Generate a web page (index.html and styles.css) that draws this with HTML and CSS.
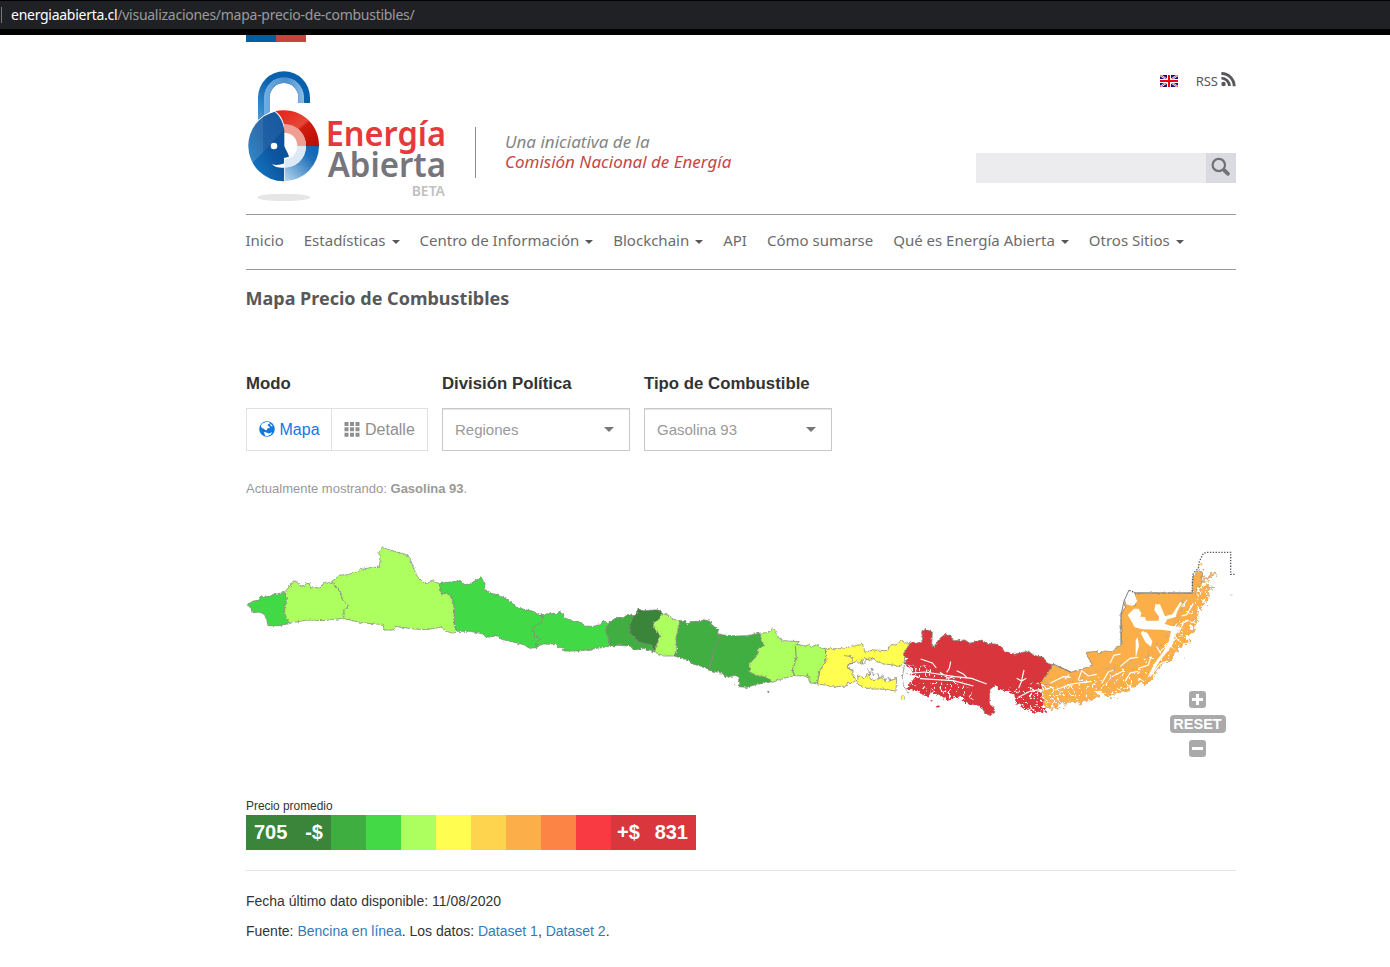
FILE: index.html
```html
<!DOCTYPE html>
<html lang="es">
<head>
<meta charset="utf-8">
<title>Mapa Precio de Combustibles</title>
<link rel="stylesheet" href="styles.css">
</head>
<body>
<div class="urlbar"><div class="url"><span class="host">energiaabierta.cl</span>/visualizaciones/mapa-precio-de-combustibles/</div></div>
<div class="page">
<div class="gob"><i></i><i></i></div>
<header class="header">
  <svg class="logo" viewBox="0 0 660 450" width="220" height="150" role="img" aria-label="Energía Abierta">
    <defs>
      <linearGradient id="lock" x1="0" y1="1" x2="1" y2="0"><stop offset="0" stop-color="#4a98d4"/><stop offset=".5" stop-color="#0a62ae"/><stop offset="1" stop-color="#0860ac"/></linearGradient>
      <linearGradient id="lock2" x1="0" y1="0" x2="1" y2="0"><stop offset="0" stop-color="#73aee0"/><stop offset=".55" stop-color="#4a8fce"/><stop offset="1" stop-color="#8abce6"/></linearGradient>
      <linearGradient id="face" x1="0" y1="1" x2="1" y2="0"><stop offset="0" stop-color="#1583cd"/><stop offset=".5" stop-color="#0d559f"/><stop offset="1" stop-color="#074a95"/></linearGradient>
      <linearGradient id="red" x1="0" y1="0" x2="1" y2="1"><stop offset="0" stop-color="#e51f18"/><stop offset=".5" stop-color="#e54836"/><stop offset=".56" stop-color="#d21b10"/><stop offset="1" stop-color="#b50c00"/></linearGradient>
      <linearGradient id="blue" x1="0" y1="1" x2="1" y2="0"><stop offset="0" stop-color="#b9d9f0"/><stop offset=".7" stop-color="#1f70b9"/><stop offset="1" stop-color="#0864ae"/></linearGradient>
    </defs>
    <path d="M54 180V112a78 78 0 0 1 156 0v17h-35v-17a43 43 0 0 0-86 0v50z" fill="url(#lock)"/>
    <path d="M72 165V112a60 60 0 0 1 120 0v17h-17v-17a43 43 0 0 0-86 0v44z" fill="url(#lock2)"/>
    <circle cx="132" cy="258" r="110" fill="#fff"/>
    <path d="M106 154a105 105 0 0 1 131 104h-39c0-34-25-64-66-64-5-19-12-30-26-40z" fill="url(#red)"/>
    <path d="M132 192a65 65 0 0 1 66 66h-26c0-24-17-40-40-40z" fill="#ee9e92"/>
    <path d="M237 258a106 106 0 0 1-103 106v-42c34 1 64-26 64-64z" fill="url(#blue)"/>
    <path d="M198 258a66 66 0 0 1-64 65v-25c22-1 38-17 38-40z" fill="#dbeaf6"/>
    <path d="M104 155a105 105 0 0 0-79 103 106 106 0 0 0 107 106v-70l15-4c-2-10-11-23-14-32v-46c-3-24-13-45-29-57z" fill="url(#face)"/>
    <path d="M69 168v109l62-67c-5-27-12-43-27-55-13 3-25 7-35 13z" fill="#fff" opacity=".07"/>
    <path d="M25 258c0-40 18-72 44-90v109l-32 32c-7-14-12-32-12-51z" fill="#fff" opacity=".14"/>
    <circle cx="102" cy="258" r="10" fill="#fff"/>
    <path d="M96 313c12 4 25 2 37-3v13c-15 1-29-1-37-10z" fill="#fff"/>
    <ellipse cx="131" cy="412" rx="80" ry="11" fill="#e6e6e6"/>
    <g class="brand">
      <text x="257" y="258" font-size="105" fill="#e5393c" textLength="361" lengthAdjust="spacingAndGlyphs">Energía</text>
      <text x="263" y="352" font-size="103" fill="#75757b" textLength="355" lengthAdjust="spacingAndGlyphs">Abierta</text>
      <text x="515" y="408" font-size="45" fill="#bfbfc1" textLength="100" lengthAdjust="spacingAndGlyphs">BETA</text>
    </g>
  </svg>
  <div class="tagline">Una iniciativa de la<br><span>Comisión Nacional de Energía</span></div>
  <div class="tools">
    <div class="links">
      <svg width="18" height="12" viewBox="0 0 18 12"><path fill="#10107b" d="M0 0h18v12H0z"/><path d="M0 0l18 12M18 0L0 12" stroke="#fff" stroke-width="2.2"/><path d="M0 0l18 12M18 0L0 12" stroke="#d8203a" stroke-width=".8"/><path d="M9 0v12M0 6h18" stroke="#fff" stroke-width="4"/><path d="M9 0v12M0 6h18" stroke="#e8001c" stroke-width="2"/></svg>
      <span>RSS</span>
      <svg class="rss" width="15" height="15" viewBox="0 0 15 15" fill="none" stroke="#58585a"><circle cx="2.500" cy="12" r="2.200" fill="#58585a" stroke="none"/><path d="M.4 6.100a8 8 0 0 1 8 8M.4 1.500a12.700 12.700 0 0 1 12.800 12.700" stroke-width="2.900"/></svg>
    </div>
    <div class="search"><div class="field"></div><div class="go"><svg width="30" height="30" viewBox="0 0 30 30" fill="none" stroke="#707175"><circle cx="12.800" cy="12" r="6.200" stroke-width="2.200"/><path d="M17 16.300l1.500 1.300" stroke-width="2"/><path d="M18.500 17.500l3.500 3.300" stroke-width="3.800" stroke-linecap="round"/></svg></div></div>
  </div>
</header>
<nav class="nav">
  <a>Inicio</a><a class="dd">Estadísticas</a><a class="dd">Centro de Información</a><a class="dd">Blockchain</a><a>API</a><a>Cómo sumarse</a><a class="dd">Qué es Energía Abierta</a><a class="dd">Otros Sitios</a>
</nav>
<h1>Mapa Precio de Combustibles</h1>
<div class="controls">
  <div><label>Modo</label>
    <div class="modes">
      <span class="on"><svg width="16" height="16" viewBox="0 0 16 16"><circle cx="8" cy="8" r="7.800" fill="#1377e2"/><path d="M3 2.700L7 1l3 .1 1 1.500-1.800.5-.4 1.700 1.700.8.200 1.400-2 .2-1.200 2L6 8.900 4.700 7.500 3 7.200 1.800 5z" fill="#fff"/><path d="M11.500 2.400l2.200 2.600-.8.400-1.700-1.200zM4.800 11l2.700.5 2.300 1.100 3.500-1.300-1.500 2.200-3 1.500-2.600-.3z" fill="#fff"/></svg>Mapa</span>
      <span><svg width="16" height="16" viewBox="0 0 16 16" fill="#8f8f8f"><path d="M.5 1h4v4h-4zM6 1h4v4H6zM11.500 1h4v4h-4zM.5 6.300h4v4h-4zM6 6.300h4v4H6zM11.500 6.300h4v4h-4zM.5 11.700h4v4h-4zM6 11.700h4v4H6zM11.500 11.700h4v4h-4z"/></svg>Detalle</span>
    </div></div>
  <div><label>División Política</label><div class="select">Regiones</div></div>
  <div><label>Tipo de Combustible</label><div class="select">Gasolina 93</div></div>
</div>
<p class="status">Actualmente mostrando: <b>Gasolina 93</b>.</p>
<div class="map">
<svg width="990" height="230" viewBox="246 530 990 230">
  <defs>
    <filter id="rough" x="-5%" y="-5%" width="110%" height="110%"><feTurbulence type="fractalNoise" baseFrequency=".12" numOctaves="2" seed="4"/><feDisplacementMap in="SourceGraphic" scale="10" xChannelSelector="R" yChannelSelector="G"/></filter>
    <filter id="coast" x="-5%" y="-5%" width="110%" height="110%"><feTurbulence type="turbulence" baseFrequency=".045" numOctaves="3" seed="9" result="n"/><feColorMatrix in="n" type="matrix" values="0 0 0 0 0  0 0 0 0 0  0 0 0 0 0  0 0 0 14 -1.300" result="m"/><feTurbulence type="fractalNoise" baseFrequency=".07" numOctaves="3" seed="3" result="f"/><feDisplacementMap in="SourceGraphic" in2="f" scale="34" xChannelSelector="R" yChannelSelector="G" result="d"/><feComposite in="d" in2="m" operator="in"/></filter>
  </defs>
  <g class="regions">
    <g transform="translate(240 530) scale(.33333)" filter="url(#rough)">
      <path fill="#43d946" d="M22 224L40 213 57 211 64 197 70 202 90 196 133 187 141 210 135 225 134 248 140 266 149 280 120 287 84 287 80 270 74 254 60 246 36 248 34 236z"/>
      <path fill="#adff60" d="M133 187L164 152 187 170 197 160 208 161 212 175 219 170 235 174 243 172 253 155 260 160 276 156 300 185 308 210 326 229 312 241 311 264 285 268 250 272 200 270 149 280 140 266 134 248 135 225 141 210z"/>
      <path fill="#adff60" d="M276 154L300 135 325 134 340 127 352 128 362 119 395 112 416 112 421 95 416 66 428 53 506 77 532 140 555 161 567 158 580 149 586 157 598 160 604 190 620 190 634 198 643 228 641 265 643 285 652 303 638 310 620 304 603 291 560 299 520 297 466 289 462 300 432 300 430 288 420 283 370 279 311 266 312 241 326 229 308 210 300 185z"/>
    </g>
    <g transform="translate(430 560) scale(.33333)" filter="url(#rough)">
      <path fill="#43d946" d="M28 70L92 62 100 73 118 73 150 53 162 60 165 74 162 87 185 100 220 112 240 124 262 144 310 154 328 166 340 168 337 185 320 195 306 206 315 228 328 236 318 250 318 263 298 265 282 254 240 244 215 238 200 228 168 232 160 222 120 214 81 214 73 196 74 170 73 138 64 108 50 100 34 100z"/>
      <path fill="#43d946" d="M328 166L345 162 385 160 387 154 400 160 405 174 430 184 455 188 462 198 490 199 512 194 520 181 527 188 540 186 527 210 536 235 541 259 500 265 450 273 402 273 398 262 385 262 375 251 360 253 340 252 318 263 318 250 328 236 315 228 306 206 320 195 337 185 340 168z"/>
      <path fill="#3fae41" d="M540 186L560 172 580 173 595 163 610 167 600 200 600 220 622 242 650 250 665 255 672 278 660 270 640 265 612 271 600 258 560 256 541 259 536 235 527 210z"/>
      <path fill="#3a853a" d="M610 167L622 162 624 147 640 152 690 149 697 161 681 183 669 190 674 205 690 225 682 250 674 275 665 255 640 250 622 242 600 220 598 200z"/>
      <path fill="#adff60" d="M697 161L715 166 730 178 751 180 745 203 738 236 742 268 733 288 700 288 674 276 682 250 690 225 674 205 669 188 681 183z"/>
    </g>
    <g transform="translate(640 590) scale(.33333)" filter="url(#rough)">
      <path fill="#3fae41" d="M121 92L137 92 141 104 150 95 182 94 190 89 212 94 215 104 235 120 232 133 240 146 220 180 218 205 204 238 185 230 160 222 140 209 103 198 112 180 108 148 115 115z"/>
      <path fill="#3fae41" d="M232 131L250 135 290 138 320 137 362 129 362 150 375 165 355 175 352 195 330 220 328 245 350 257 380 262 397 275 370 280 350 283 320 292 296 290 300 278 292 270 298 262 285 256 265 262 240 248 204 240 218 205 220 180 240 146z"/>
      <path fill="#adff60" d="M362 129L385 128 398 117 410 125 415 143 430 152 478 155 466 170 469 200 463 225 457 240 463 257 430 265 397 277 380 262 350 257 328 245 330 220 352 195 355 175 375 165 362 150z"/>
      <path fill="#adff60" d="M474 163L495 169 510 162 514 172 531 163 540 173 556 176 558 215 540 240 532 282 510 278 506 265 495 258 463 257 457 240 463 225 469 200 466 170z"/>
      <path fill="#fffd50" d="M556 176L600 176 640 168 668 163 675 187 700 180 740 182 755 163 768 165 785 152 797 160 812 156 795 185 793 215 780 230 760 225 730 222 705 212 700 201 690 212 672 203 665 223 650 212 640 220 625 223 623 233 640 245 635 252 648 268 640 278 622 277 620 288 590 290 532 282 540 240 558 215z"/>
      <path fill="#fffd50" d="M655 258L675 264 684 250 692 268 702 272 722 262 740 275 770 265 768 304 740 298 700 297 670 293 650 280zM785 318l7 0 1 10-9 0z"/>
      <path fill="#3fae41" d="M382 305l7-2-3 5zM281 281l5 3z"/>
      <path fill="none" stroke="#b8b8a8" stroke-width="2" d="M614 197L635 200 640 218 625 222 623 235 641 241M660 208l10 15 18-20 15 7M683 235l8 18 5-18 4 22 14-7 4 18 10-14 6 18 12-10 5 12M494 260l8-9 6 14"/>
      <path fill="none" stroke="#bbb" stroke-width="2" d="M795 215L787 260 790 288 810 313"/>
    </g>
    <g transform="translate(890 610) scale(.33333)">
      <path filter="url(#rough)" fill="#d9363e" d="M62 98L92 98 98 88 95 65 108 58 127 66 125 105 133 110 145 90 165 72 186 80 190 92 225 90 240 100 275 90 290 100 325 103 345 125 375 133 415 123 430 135 460 142 470 158 490 166 453 218 440 220 410 215 390 238 365 230 345 240 320 225 300 238 298 280 312 292 315 307 300 316 285 312 275 290 258 283 240 245 225 210 190 200 150 195 130 180 105 165 75 170 45 162 52 145 40 132z"/>
      <g filter="url(#coast)" fill="#d9363e"><path class="shore" d="M45 165L110 165 200 195 265 215 275 285 245 285 225 272 200 262 170 272 130 245 115 270 95 245 55 240 60 215 75 200z"/><path class="shore" d="M320 225L350 205 410 190 450 220 465 305 430 305 400 295 380 275 375 250 330 242z"/></g>
      <path class="shore" fill="#d9363e" d="M138 289l9-3 3 5-10 2zM120 270l8 1-3 4z"/>
      <path class="fjord" d="M92 147l35 12 12 15M182 155l-4 20-8 12M200 182l20 10 10 10M402 180l-8 35-8 20M55 190l50-4 90 14 50 5 45 17M90 206l100 6 60 16M385 262l35-18 35-6M150 187l25 18 15-5M380 205l15 8 14-8"/>
      <path class="shore" fill="#fffd50" d="M35 257l8 2-1 9-8-1z"/>
    </g>
    <g transform="translate(1035 540) scale(.33333)">
      <path filter="url(#rough)" fill="#fcae48" d="M55 373L107 397 125 392 155 382 172 375 165 362 155 345 155 337 185 334 195 340 210 333 235 336 245 320 259 317 258 225 268 205 270 183 300 198 305 183 297 159 476 159 472 140 475 105 490 92 503 98 498 135 485 145 480 185 445 190 435 235 415 260 400 300 370 325 350 345 320 360 300 390 250 380 230 400 180 410 130 418 90 433 60 440 18 430z"/>
      <g filter="url(#coast)" fill="#fcae48"><path class="isles" d="M18 425L90 415 220 385 310 360 380 310 430 230 445 185 485 150 505 142 530 138 520 160 515 185 505 200 493 215 490 245 475 260 470 275 450 287 460 305 430 325 420 345 405 365 380 370 370 385 360 405 330 435 315 430 290 445 265 455 235 468 200 462 180 475 155 485 120 485 90 495 60 500 40 508 25 490z"/><path class="isles" d="M487 122l14-3 8-11 14-2 4-9 14 2-2 10-9 2-2 15-7 2-3-9-10 2z"/></g>
      <g fill="#fff"><path class="shore" d="M272 185l10-32 15 7 10 24-14 14-19-5z"/><path class="shore" d="M297 206l14 0 8 14-3 10 14 1 3 11 38 0 1-12-14-19 3-18 14 0 15 36 22-6 12-19 12-19 5 4-14 25-5 17-25 7-8 13 20 7 25 2-4 15-10 10-6 26-20 28-20 24-20 34-18 18 22-44 28-38 16-30 6-30-30-4-55-1-24-6-7-14-14-23zM323 273l14 6 15 25-4 16-17-14-14-27zM302 300l6-8 4 25-10 38z"/></g>
      <path class="fjord" d="M225 370l12-24 20-4M255 380l30-25 24-3M130 420l10-28 20 16 25-5M310 385l30-10 8-26M45 430l40-20 22 2M200 430l20-34 16-6M270 425l15-26 24-5M430 280l14-30 16-10M345 410l30-38 22-10M475 190l-20 34-15 4M60 450l50-18 60-8M90 418l12-14M230 410l36-18M365 320l12 20M440 200l16-20"/>
      <path class="dots" d="M472 155V125L475 100 490 85 493 65 505 40 515 37H587V103H604M283 151L300 158"/>
      <path class="shore" fill="#fcae48" d="M487 76l6 1-1 6zM494 69l9 2-3 7zM501 87l7 0-2 6z"/><path class="islet" d="M585 165h8M447 353l3 2"/>
    </g>
  </g>
  <path fill="none" stroke="#857f7a" d="M1193 593H1134M1121 645V615L1124 601 1129 590M1053 664L1071 672"/>
</svg>
<div class="zoom"><button><svg width="17" height="17"><path d="M8.500 3v11M3 8.500h11" stroke="#fff" stroke-width="3"/></svg></button><button class="reset">RESET</button><button><svg width="17" height="17"><path d="M3 8.500h11" stroke="#fff" stroke-width="3"/></svg></button></div>
</div>
<div class="legend-title">Precio promedio</div>
<div class="legend"><span class="end">705 <b>-$</b></span><i class="c1"></i><i class="c2"></i><i class="c3"></i><i class="c4"></i><i class="c5"></i><i class="c6"></i><i class="c7"></i><i class="c8"></i><span class="end hi"><b>+$</b> 831</span></div>
<footer class="foot"><p>Fecha último dato disponible: 11/08/2020</p><p>Fuente: <a>Bencina en línea</a>. Los datos: <a>Dataset 1</a>, <a>Dataset 2</a>.</p></footer>
</div>
</body>
</html>
```
FILE: styles.css
```css
*{box-sizing:border-box}
body{margin:0;background:#fff;color:#333;font-family:"Liberation Sans",Arial,sans-serif;font-size:14px;height:967px;overflow:hidden}
.urlbar{height:35px;background:#202124;border-top:1px solid #000;border-bottom:6px solid #000;padding:6px 0 0 1px}
.url{border-left:1px solid #777;height:16px;line-height:15px;padding-left:9px;color:#999b9e;font-family:"Noto Sans",sans-serif;font-size:14px;white-space:nowrap;letter-spacing:-.27px}
.host{color:#fff}
.page{width:990px;margin-left:246px}
.gob{display:flex;height:7px}
.gob i{width:30px;background:#005ea5}
.gob i+i{background:#c6443f}
.header{display:flex;height:173px;border-bottom:1px solid #999;font-family:"Noto Sans",sans-serif}
.logo{margin:18px 0 0 -6px;flex:none}
.brand{font-family:"Noto Sans",sans-serif;font-weight:600}
.tagline{margin:85px 0 0 15px;height:51px;border-left:1px solid #8c8c8c;padding:5px 0 0 29px;font-size:17px;font-style:italic;line-height:20px;color:#858585;white-space:nowrap}
.tagline span{color:#c54747}
.tools{margin-left:auto;width:260px}
.links{display:flex;justify-content:flex-end;height:111px;padding-top:29px;font-size:13px;line-height:20px;color:#58585a}
.links svg:first-child{margin:4px 18px 0 0}
.links .rss{margin:1px 0 0 3px}
.search{display:flex;height:30px}
.field{flex:1;background:#ececee}
.go{width:30px;background:#dadbe0}
.nav{display:flex;gap:20px;height:55px;border-bottom:1px solid #999;padding-top:14px;font:15px/22px "Noto Sans",sans-serif;color:#6b6b6e;white-space:nowrap}
.nav a:first-child{margin-left:-.6px}
.dd::after{content:"";display:inline-block;border:4px solid transparent;border-top-color:#58585a;border-bottom:0;margin-left:6px;vertical-align:2px}
h1{margin:15px 0 0 -.5px;font:700 18px/26px "Noto Sans",sans-serif;color:#58585a}
.controls{display:flex;gap:14px;margin-top:62px}
label{display:block;font-size:16.8px;font-weight:700;line-height:22px;margin-bottom:13px;color:#333}
.modes{display:flex;width:182px;height:43px;border:1px solid #e0e0e0;font-size:16px;line-height:41px;color:#8f8f8f}
.modes span{padding-left:12px;display:flex;align-items:center}
.modes .on{width:85px;border-right:1px solid #e0e0e0;color:#1377e2}
.modes svg{margin:-2px 5px 0 0;flex:none}
.modes .on svg{margin-right:4.500px}
.select{width:188px;height:43px;border:1px solid #c8c8c8;box-shadow:inset 0 1px 1px #e4e4e4;padding:0 15px 0 12px;display:flex;align-items:center;justify-content:space-between;font-size:15px;color:#999}
.select::after{content:"";border:5px solid transparent;border-top-color:#777;border-bottom:0}
.status{margin:30px 0 0;font-size:13px;line-height:16px;color:#999}
.map{position:relative;height:230px;margin-top:33px}
.map svg{display:block}
.regions path{stroke:#86867e;stroke-width:2.300px}
.regions .shore{stroke:none}
.regions .isles{stroke:#c8a984}
.regions .fjord{fill:none;stroke:#fff;stroke-width:3.500px}
.regions .dots{fill:none;stroke:#555;stroke-width:4px;stroke-dasharray:4 4.500}
.regions .islet{stroke:#ccb599}
.zoom{position:absolute;right:10.500px;top:161px;width:56px;display:flex;flex-direction:column;align-items:center;gap:7px}
.zoom button{width:17px;height:17px;padding:0;border:0;border-radius:3px;background:#aaa;color:#fff}
.zoom .reset{width:56px;height:18px;border-radius:4px;font:700 14.500px/18px "Liberation Sans",sans-serif}
.legend-title{margin-top:39px;font-size:11.900px;line-height:14px;padding-bottom:2px}
.legend{display:flex;width:450px;height:35px}
.legend i{width:35px}
.end{width:85px;background:#3a853a;color:#fff;font-size:20px;font-weight:700;line-height:35px;display:flex;justify-content:space-between;padding:0 8px}
.hi{background:#d9363e;padding-left:6px}
.c1{background:#3fae41}.c2{background:#43d946}.c3{background:#adff60}.c4{background:#fffd50}.c5{background:#fed44e}.c6{background:#fcae48}.c7{background:#fc8444}.c8{background:#fa3a42}
.foot{margin-top:20px;border-top:1px solid #e5e5e5;padding-top:20px}
.foot p{margin:0 0 10px;line-height:20px}
.foot a{color:#337ab7}
```
